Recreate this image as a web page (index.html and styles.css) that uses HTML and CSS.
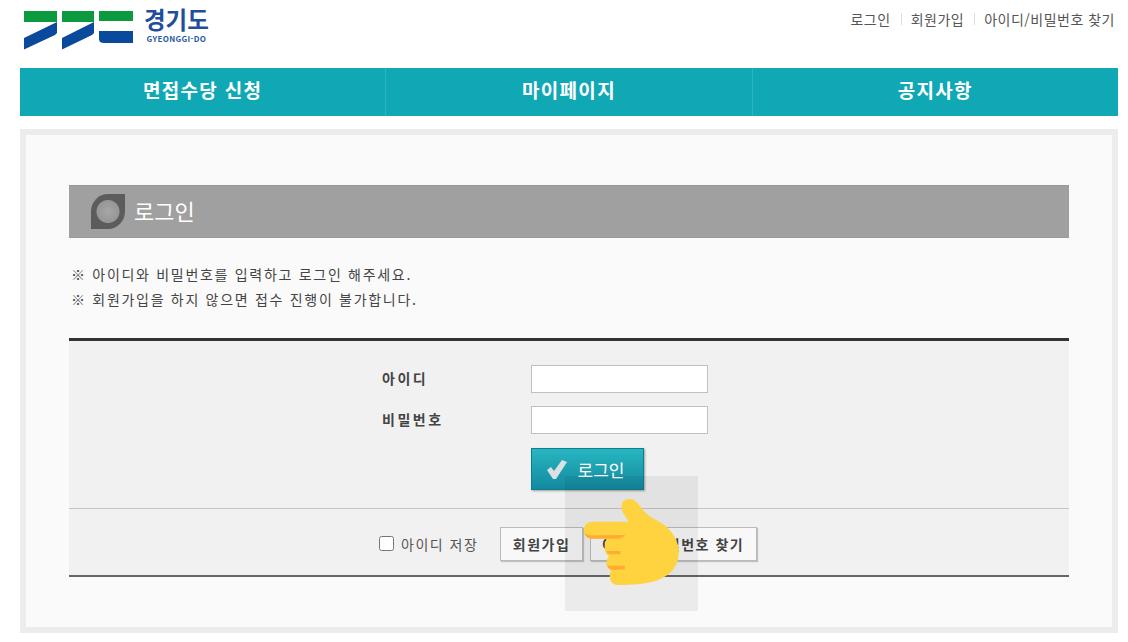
FILE: index.html
```html
<!DOCTYPE html>
<html lang="ko">
<head>
  <meta charset="UTF-8" />
  <title>경기도 면접수당 로그인</title>
  <link rel="stylesheet" href="styles.css">
</head>
<body>
  <div id="wrap">
    <!-- 상단 -->
    <header class="top">
      <a class="logo" href="#">
        <svg class="logo-mark" width="110" height="40" viewBox="0 0 110 40">
          <path fill="#0b9a3e" d="M0 1h33v11H0zM38 1h32v11H38zM75 1h34v10H75z"/>
          <path fill="#0a4a9c" d="M33 12v11l-2 2L0 39.500V28zM70 12v11l-2 2L38 39.500V28zM75 21h34v12H80q-5 0-5-4z"/>
        </svg>
        <span class="logo-text">
          <strong>경기도</strong>
          <small>GYEONGGI-DO</small>
        </span>
      </a>
      <ul class="util">
        <li><a href="#">로그인</a></li>
        <li><a href="#">회원가입</a></li>
        <li><a href="#">아이디/비밀번호 찾기</a></li>
      </ul>
    </header>

    <!-- 메뉴 -->
    <nav class="gnb">
      <a href="#">면접수당 신청</a>
      <a href="#">마이페이지</a>
      <a href="#">공지사항</a>
    </nav>

    <!-- 본문 -->
    <main class="box">
      <h2 class="title"><span class="title-icon"></span><span class="title-text">로그인</span></h2>
      <p class="notice">※ 아이디와 비밀번호를 입력하고 로그인 해주세요.<br>※ 회원가입을 하지 않으면 접수 진행이 불가합니다.</p>

      <form class="login">
        <div class="fields">
          <label class="label" for="uid">아이디</label>
          <input class="input" id="uid" type="text">
          <label class="label" for="upw">비밀번호</label>
          <input class="input" id="upw" type="password">
          <button class="btn-login" type="button">
            <svg width="20" height="19" viewBox="0 0 20 19"><path fill="#d9e1e3" d="M0 10l4-3 3 4 8-11 5 2-11 17H6z"/></svg>
            로그인
          </button>
        </div>
        <div class="etc">
          <label class="save"><input type="checkbox">아이디 저장</label>
          <button class="btn" type="button">회원가입</button>
          <button class="btn" type="button">아이디/비밀번호 찾기</button>
        </div>
      </form>
    </main>
  </div>

  <!-- 커서 강조 -->
  <div class="pointer">
    <svg width="133" height="135" viewBox="-44 -57 398 405">
      <path fill="#ffd23f" d="M125 35C125 20 135 12 150 12C165 12 175 25 185 40C200 62 225 72 250 88C280 110 297 140 297 172C297 210 275 240 235 255C200 268 160 270 115 270C98 270 88 258 90 240C92 232 92 230 94 228C84 222 78 210 80 200C82 192 84 188 88 184C78 178 73 165 75 150L80 130H35C20 130 12 118 12 105C12 90 22 80 38 80H147C135 62 125 50 125 35Z"/>
      <path fill="#ffac33" d="M13 113C16 124 24 131 38 131H115Q130 130 136 120L40 121C28 121 18 118 13 113ZM78 168H122V178H90Q82 175 78 168ZM82 212H135V223L96 225Q86 220 82 212Z"/>
    </svg>
  </div>
</body>
</html>
```

FILE: styles.css
```css
* { margin: 0; padding: 0; box-sizing: border-box; }
html, body { height: 100%; overflow: hidden; background: #fff; }
body { font-family: 'Noto Sans CJK KR', 'Noto Sans', sans-serif; color: #444; font-size: 14px; }
a { color: inherit; text-decoration: none; }
ul { list-style: none; }

#wrap { width: 1098px; margin-left: 20px; }

/* 상단 */
.top { height: 68px; display: flex; justify-content: space-between; align-items: flex-start; }
.logo { display: flex; margin: 10px 0 0 4px; }
.logo-text { display: flex; flex-direction: column; align-items: center; margin-left: 10px; }
.logo-text strong { font-size: 23.500px; line-height: 22px; color: #1f4e9c; font-weight: 700; margin-top: -2px; }
.logo-text small { font-size: 8px; line-height: 10px; color: #2a5aa5; font-weight: 700; margin-top: 4px; letter-spacing: 0.3px; }
.util { display: flex; align-items: center; height: 20px; margin: 9px 3px 0 0; color: #555; font-size: 14px; letter-spacing: 0.5px; }
.util li + li { margin-left: 10px; padding-left: 10px; position: relative; }
.util li + li::before { content: ''; position: absolute; left: 0; top: 4px; width: 1px; height: 12px; background: #ddd; }

/* 메뉴 */
.gnb { display: flex; height: 48px; background: #11a8b5; }
.gnb a { flex: 1; display: flex; align-items: center; justify-content: center; padding-bottom: 6px; color: #fff; font-size: 19px; font-weight: 700; border-left: 1px solid #2db4bf; letter-spacing: 1.300px; }
.gnb a:first-child { border-left: 0; }

/* 본문 */
.box { margin-top: 13px; height: 504px; border: 6px solid #ececec; background: #fafafa; padding: 50px 43px 0; }
.title { display: flex; align-items: center; height: 53px; padding-left: 22px; background: #a0a0a0; border: 1px solid #999; border-width: 1px 0; color: #fff; font-size: 22px; font-weight: 400; }
.title-icon { width: 34px; height: 35px; margin-right: 9px; background: radial-gradient(circle at 50% 50%, #a6a6a6 0, #969696 11px, #5c5c5c 12px); border-radius: 50% 0 50% 0; }
.title-text { padding-bottom: 4px; }
.notice { margin: 24px 0 26px 2px; font-size: 14px; line-height: 25px; color: #444; letter-spacing: 1.7px; }

.login { background: #f1f1f1; border-top: 3px solid #333; border-bottom: 2px solid #666; }
.fields { display: grid; grid-template-columns: 80px 177px; grid-auto-rows: 28px; column-gap: 69px; row-gap: 13px; padding: 24px 0 0 313px; height: 168px; border-bottom: 1px solid #c4c4c4; }
.label { display: flex; align-items: center; padding-bottom: 2px; font-size: 14px; font-weight: 700; color: #444; letter-spacing: 2.500px; }
.input { height: 28px; border: 1px solid #c0c0c0; background: #fff; }
.btn-login { grid-column: 2; width: 113px; height: 42px; margin-top: 1px; padding-right: 4px; display: flex; align-items: center; justify-content: center; gap: 11px; color: #fff; font: inherit; font-size: 17px; background: linear-gradient(#27b6c1, #13899f); border: 1px solid #0f7f90; box-shadow: 1px 1px 2px rgba(0,0,0,.35); }
.etc { display: flex; align-items: center; height: 66px; padding: 3px 0 0 310px; }
.save { display: flex; align-items: center; color: #555; font-size: 14px; letter-spacing: 1.500px; margin-right: 22px; }
.save input { width: 15px; height: 15px; margin-right: 7px; }
.btn { height: 34px; padding: 0 11.500px; font: inherit; font-size: 14px; font-weight: 700; color: #444; background: #f8f8f8; border: 1px solid #bbb; box-shadow: 1px 1px 1px rgba(0,0,0,.2); letter-spacing: 1.500px; }
.btn + .btn { margin-left: 7px; }

/* 커서 강조 */
.pointer { position: absolute; left: 565px; top: 476px; width: 133px; height: 135px; background: rgba(0,0,0,.06); }
.pointer svg { display: block; }
```
